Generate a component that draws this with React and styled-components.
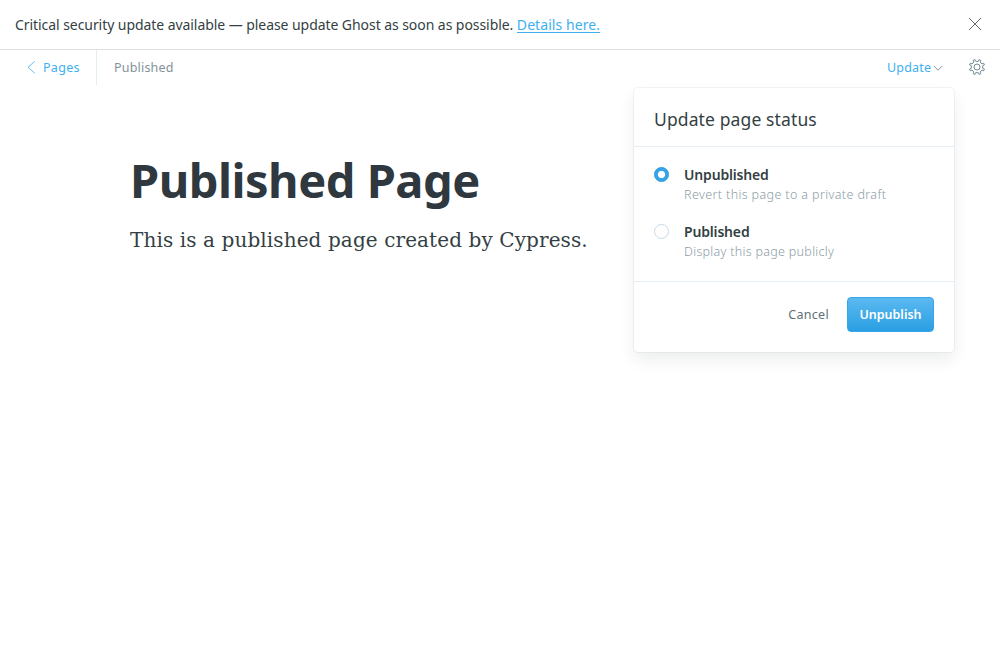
import React from "react";
import styled, { createGlobalStyle } from "styled-components";

const GlobalStyle = createGlobalStyle`
  *, *::before, *::after { box-sizing: border-box; }
  html, body { margin: 0; padding: 0; background: #fff; overflow: hidden; }
  body {
    font-family: "Noto Sans", "Open Sans", sans-serif;
    color: #343f44;
    font-size: 14px;
  }
  button { font-family: inherit; cursor: pointer; }
  h1, h2, p { margin: 0; }
  svg { display: block; flex: none; }
`;

const Screen = styled.div`
  display: flex;
  flex-direction: column;
  height: 660px;
`;

const Banner = styled.aside`
  display: flex;
  align-items: center;
  justify-content: space-between;
  height: 50px;
  padding: 0 18px 0 15px;
  border-bottom: 1px solid #dddfe1;
  font-size: 14px;
  line-height: 20px;
  white-space: nowrap;
`;

const BannerLink = styled.a`
  color: #3eb0ef;
  border-bottom: 1px solid #3eb0ef;
  display: inline-block;
  line-height: 15px;
  letter-spacing: 0.07px;
`;

const IconButton = styled.button`
  display: flex;
  padding: 0 0 1px;
  border: 0;
  background: none;
`;

const Toolbar = styled.header`
  position: relative;
  display: flex;
  align-items: center;
  height: 35px;
  padding-right: 14px;
  font-size: 12.5px;
  line-height: 20px;
  white-space: nowrap;
`;

const BackLink = styled.a`
  display: flex;
  align-items: center;
  gap: 7px;
  width: 97px;
  height: 35px;
  padding-left: 26px;
  border-right: 1px solid #e3edf4;
  color: #3eb0ef;
`;

const Status = styled.span`
  margin-left: 17px;
  color: #839198;
  letter-spacing: 0.2px;
`;

const Actions = styled.div`
  display: flex;
  align-items: center;
  gap: 24px;
  margin-left: auto;
`;

const UpdateTrigger = styled.button`
  display: flex;
  align-items: center;
  gap: 2px;
  width: 57px;
  padding: 0;
  border: 0;
  background: none;
  color: #3eb0ef;
  font-size: 12.5px;
  line-height: 20px;
`;

const Label = styled.span`
  letter-spacing: ${(p) => p.$track || 0}px;
`;

const Menu = styled.section`
  position: absolute;
  top: 38px;
  right: 46px;
  width: 320px;
  height: 264px;
  border-radius: 4px;
  background: #fff;
  box-shadow: 0 0 0 1px rgba(99, 114, 130, 0.08), 0 8px 16px rgba(27, 39, 51, 0.08);
`;

const MenuHeader = styled.div`
  height: 59px;
  padding: 19px 20px 0;
  border-bottom: 1px solid #e5eff5;
`;

const MenuTitle = styled.h2`
  font-size: 17.5px;
  font-weight: 400;
  line-height: 24px;
  letter-spacing: 0.12px;
`;

const Options = styled.div`
  display: flex;
  flex-direction: column;
  gap: 17px;
  height: 135px;
  padding: 18px 20px 0;
  border-bottom: 1px solid #e5eff5;
`;

const Option = styled.div`
  display: flex;
  gap: 15px;
  height: 40px;
`;

const Radio = styled.span`
  flex: none;
  width: 15px;
  height: 15px;
  margin-top: 2px;
  border-radius: 50%;
  border: 1px solid ${(p) => (p.$checked ? "#2292d8" : "#c5dcea")};
  background: ${(p) => (p.$checked ? "radial-gradient(circle, #fff 3.2px, #36a6e8 4px)" : "#fff")};
`;

const OptionText = styled.div`
  display: flex;
  flex-direction: column;
`;

const OptionName = styled.div`
  font-size: 14px;
  font-weight: 600;
  line-height: 20px;
  letter-spacing: -0.17px;
`;

const OptionHint = styled.div`
  font-size: 12.5px;
  font-weight: 300;
  line-height: 20px;
  letter-spacing: ${(p) => p.$track}px;
  color: #8c9da6;
`;

const MenuFooter = styled.div`
  display: flex;
  justify-content: flex-end;
  gap: 18px;
  padding: 15px 20px 0;
`;

const CancelButton = styled.button`
  height: 35px;
  padding: 0;
  border: 0;
  background: none;
  color: #5f6f77;
  font-size: 12.5px;
  letter-spacing: 0.3px;
`;

const SubmitButton = styled.button`
  width: 87px;
  height: 35px;
  padding: 0;
  border: 1px solid #36a6e8;
  border-radius: 4px;
  background: linear-gradient(#5bb9f0, #2a9fe3);
  color: #fff;
  font-size: 12.5px;
  font-weight: 600;
`;

const Editor = styled.main`
  padding: 64px 130px 0;
`;

const PageTitle = styled.h1`
  font-size: 47px;
  font-weight: 700;
  line-height: 62px;
  letter-spacing: -0.5px;
  color: #2e383e;
  white-space: nowrap;
`;

const Paragraph = styled.p`
  margin-top: 13px;
  font-family: "DejaVu Serif", serif;
  font-size: 20px;
  line-height: 32px;
  letter-spacing: 0.1px;
`;

const CloseIcon = () => (
  <svg width="14" height="14" viewBox="0 0 14 14" fill="none" stroke="#50595e">
    <path d="M1 1l12 12M13 1L1 13" strokeWidth="0.9" />
  </svg>
);

const BackIcon = () => (
  <svg width="10" height="16" viewBox="0 0 10 16" fill="none" stroke="#3eb0ef">
    <path d="M8.500 1.500L2 7.300l6.500 5.700" strokeWidth="0.8" strokeLinecap="round" strokeLinejoin="round" />
  </svg>
);

const ChevronIcon = () => (
  <svg width="10" height="8" viewBox="0 0 10 8" fill="none" stroke="#738a94">
    <path d="M1.200 2.300L5 6.200l3.800-3.900" strokeWidth="0.9" strokeLinecap="round" strokeLinejoin="round" />
  </svg>
);

// Outline of an eight-toothed wheel with a valley at each multiple of 45 degrees.
const gearOutline = Array.from({ length: 8 }, (_, i) =>
  [[-13, 5.900], [0, 5.600], [13, 5.900], [15.500, 7.700], [29.500, 7.700]].map(([offset, r]) => {
    const a = ((i * 45 + offset) * Math.PI) / 180;
    return `${(9 + r * Math.sin(a)).toFixed(2)},${(9 - r * Math.cos(a)).toFixed(2)}`;
  })
)
  .flat()
  .join(" ");

const GearIcon = () => (
  <svg width="18" height="18" viewBox="0 0 18 18" fill="none" stroke="#738a94" strokeWidth="1">
    <circle cx="9" cy="9" r="3" />
    <polygon points={gearOutline} strokeLinejoin="round" />
  </svg>
);

const options = [
  { name: "Unpublished", hint: "Revert this page to a private draft", track: 0.38, checked: true },
  { name: "Published", hint: "Display this page publicly", track: 0.3, checked: false },
];

export default function App() {
  return (
    <Screen>
      <GlobalStyle />
      <Banner>
        <div>
          <Label $track={-0.063}>Critical security update available — please update Ghost as soon as possible. </Label>
          <BannerLink>Details here.</BannerLink>
        </div>
        <IconButton aria-label="Close"><CloseIcon /></IconButton>
      </Banner>
      <Toolbar>
        <BackLink><BackIcon /><Label $track={0.3}>Pages</Label></BackLink>
        <Status>Published</Status>
        <Actions>
          <UpdateTrigger><Label $track={0.2}>Update</Label><ChevronIcon /></UpdateTrigger>
          <IconButton aria-label="Settings"><GearIcon /></IconButton>
        </Actions>
        <Menu>
          <MenuHeader><MenuTitle>Update page status</MenuTitle></MenuHeader>
          <Options>
            {options.map((o) => (
              <Option key={o.name}>
                <Radio $checked={o.checked} />
                <OptionText>
                  <OptionName>{o.name}</OptionName>
                  <OptionHint $track={o.track}>{o.hint}</OptionHint>
                </OptionText>
              </Option>
            ))}
          </Options>
          <MenuFooter>
            <CancelButton>Cancel</CancelButton>
            <SubmitButton>Unpublish</SubmitButton>
          </MenuFooter>
        </Menu>
      </Toolbar>
      <Editor>
        <PageTitle>Published Page</PageTitle>
        <Paragraph>This is a published page created by Cypress.</Paragraph>
      </Editor>
    </Screen>
  );
}
